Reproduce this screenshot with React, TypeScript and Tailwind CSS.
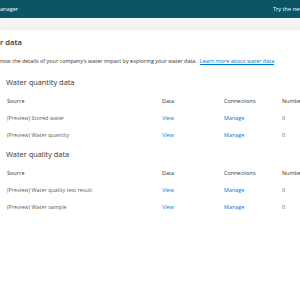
import React from "react";

const font = { fontFamily: '"Open Sans", "Noto Sans", sans-serif' };

type Row = { source: string };

function Section({ title, rows }: { title: string; rows: Row[] }) {
  return (
    <div className="flex flex-col">
      <div className="h-[18px] flex items-center pl-[6px] text-[7.4px] text-[#323130]">{title}</div>
      <div className="grid grid-cols-[155px_62px_58px_40px] h-[18px] items-center pl-[7px] text-[5.45px] text-[#323130]">
        <span>Source</span>
        <span>Data</span>
        <span>Connections</span>
        <span className="whitespace-nowrap">Number of records</span>
      </div>
      {rows.map((r) => (
        <div
          key={r.source}
          className="grid grid-cols-[155px_62px_58px_40px] h-[17px] items-center pl-[7px] text-[5.45px] text-[#605e5c]"
        >
          <span>{r.source}</span>
          <span className="text-[#0078d4]">View</span>
          <span className="text-[#0078d4]">Manage</span>
          <span>0</span>
        </div>
      ))}
    </div>
  );
}

export default function App() {
  return (
    <div className="w-[300px] h-[300px] overflow-hidden bg-white" style={font}>
      <div className="h-[18px] bg-[#0b5566] flex items-center justify-between text-white text-[5.6px] whitespace-nowrap overflow-hidden">
        <span>anager</span>
        <span className="w-[27px] overflow-hidden">Try the new experience</span>
      </div>
      <div className="h-[12px] bg-[#f5f4f2] border-b border-[#edebe9]" />
      <div className="pt-[7px]">
        <div className="h-[12px] flex items-center text-[7.6px] font-semibold text-[#323130]">r data</div>
        <div className="mt-[6px] h-[12px] flex items-center text-[5.45px] text-[#323130] whitespace-nowrap">
          <span>now the details of your company's water impact by exploring your water data.</span>
          <span className="ml-[3px] text-[#0078d4] underline">Learn more about water data</span>
        </div>
        <div className="mt-[7px]">
          <Section
            title="Water quantity data"
            rows={[{ source: "(Preview) Stored water" }, { source: "(Preview) Water quantity" }]}
          />
        </div>
        <div className="mt-[2px]">
          <Section
            title="Water quality data"
            rows={[
              { source: "(Preview) Water quality test result" },
              { source: "(Preview) Water sample" },
            ]}
          />
        </div>
      </div>
    </div>
  );
}
